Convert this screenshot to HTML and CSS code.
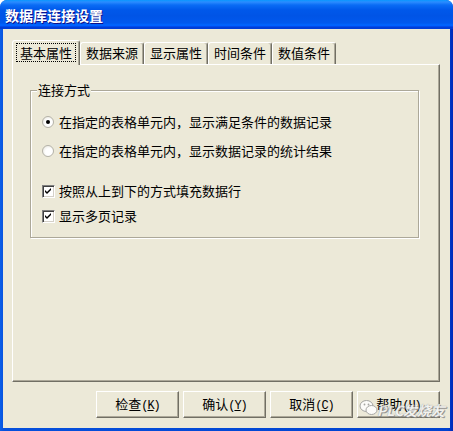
FILE: index.html
```html
<!DOCTYPE html>
<html lang="zh-CN">
<head>
<meta charset="utf-8">
<title>数据库连接设置</title>
<link rel="stylesheet" href="styles.css">
</head>
<body>
<div class="window">
  <div class="titlebar"><span class="title">数据库连接设置</span></div>
  <div class="client">
    <div class="tabs">
      <div class="tab active"><span class="focus">基本属性</span></div>
      <div class="tab">数据来源</div>
      <div class="tab">显示属性</div>
      <div class="tab">时间条件</div>
      <div class="tab">数值条件</div>
    </div>
    <div class="panel">
      <div class="group">
        <span class="legend">连接方式</span>
        <div class="row r1"><span class="radio on"></span>在指定的表格单元内，显示满足条件的数据记录</div>
        <div class="row r2"><span class="radio"></span>在指定的表格单元内，显示数据记录的统计结果</div>
        <div class="row r3"><span class="check"><svg width="9" height="9" viewBox="0 0 9 9"><polygon points="1,3 3,5 7,1 7,3 3,7 1,5" fill="#000"/></svg></span>按照从上到下的方式填充数据行</div>
        <div class="row r4"><span class="check"><svg width="9" height="9" viewBox="0 0 9 9"><polygon points="1,3 3,5 7,1 7,3 3,7 1,5" fill="#000"/></svg></span>显示多页记录</div>
      </div>
    </div>
    <div class="buttons">
      <div class="btn">检查<span class="acc">(<u>K</u>)</span></div>
      <div class="btn">确认<span class="acc">(<u>Y</u>)</span></div>
      <div class="btn">取消<span class="acc">(<u>C</u>)</span></div>
      <div class="btn">帮助<span class="acc">(<u>H</u>)</span></div>
    </div>
  </div>
  <div class="watermark">
    <svg width="20" height="18" viewBox="0 0 20 18"><ellipse cx="7.5" cy="7" rx="6.5" ry="5.5" fill="#fff" stroke="#9a9a9a" stroke-width="1"/><ellipse cx="12.5" cy="11" rx="5.5" ry="4.5" fill="#fff" stroke="#9a9a9a" stroke-width="1"/><circle cx="5.5" cy="5.5" r="0.9" fill="#999"/><circle cx="9.5" cy="5.5" r="0.9" fill="#999"/></svg>
    <span class="wm-text">PLC发烧友</span>
  </div>
</div>
</body>
</html>
```

FILE: styles.css
```css
html, body {
  margin: 0;
  padding: 0;
  background: #ffffff;
}

body {
  font-family: "Noto Sans CJK SC", "Liberation Sans", sans-serif;
  color: #000;
}

.window {
  position: relative;
  width: 453px;
  height: 431px;
  box-sizing: border-box;
  border-radius: 7px 7px 0 0;
  background: linear-gradient(to right, #0a5ee8 0px, #0650dc 4px, #0042cf 448px, #0029b8 453px);
  display: flex;
  flex-direction: column;
  overflow: hidden;
}

.titlebar {
  height: 29px;
  flex: none;
  display: flex;
  align-items: center;
  padding-left: 5px;
  background: linear-gradient(180deg, #0997ff 0px, #2b8cff 2px, #0a6cf5 5px, #0058ea 10px, #0054e6 16px, #0058ee 23px, #0066ff 25px, #005bff 26px, #003dd7 27px, #003dd7 29px);
}

.title {
  color: #fff;
  font-size: 14px;
  font-weight: bold;
  line-height: 18px;
  text-shadow: 1px 1px #0f1089;
}

.client {
  flex: 1;
  margin: 0 3px 3px 3px;
  background: #ece9d8;
  display: flex;
  flex-direction: column;
  padding: 11px 0 0 9px;
}

.tabs {
  display: flex;
  align-items: flex-end;
  height: 25px;
  position: relative;
  z-index: 1;
}

.tab {
  height: 22px;
  margin-bottom: 1px;
  box-sizing: border-box;
  padding: 0 5px;
  border-top: 1px solid #fff;
  border-left: 1px solid #fff;
  border-right: 1px solid #716f64;
  box-shadow: inset -1px 0 #aca899;
  border-radius: 3px 3px 0 0;
  font-size: 13px;
  line-height: 20px;
  background: #ece9d8;
}

.tab.active {
  height: 25px;
  margin-bottom: 0;
  padding: 0 3px;
}

.focus {
  display: block;
  margin-top: 2px;
  padding: 0 3px;
  border: 1px dotted #000;
  line-height: 17px;
}

.panel {
  margin-top: -1px;
  width: 428px;
  height: 318px;
  box-sizing: border-box;
  border: 1px solid;
  border-color: #fff #716f64 #716f64 #fff;
  box-shadow: inset -1px -1px #aca899;
  padding: 25px 0 0 17px;
}

.group {
  position: relative;
  width: 389px;
  height: 148px;
  box-sizing: border-box;
  border: 1px solid #aca899;
  box-shadow: 1px 1px 0 #fff, inset 1px 1px 0 #fff;
  padding-left: 11px;
  display: flex;
  flex-direction: column;
}

.legend {
  position: absolute;
  top: -9px;
  left: 6px;
  padding: 0 1px;
  background: #ece9d8;
  font-size: 13px;
  line-height: 16px;
}

.row {
  display: flex;
  align-items: center;
  height: 16px;
  font-size: 13px;
  line-height: 16px;
  white-space: nowrap;
}

.r1 { margin-top: 23px; }
.r2 { margin-top: 13px; }
.r3 { margin-top: 24px; }
.r4 { margin-top: 9px; }

.radio {
  position: relative;
  width: 12px;
  height: 12px;
  box-sizing: border-box;
  border-radius: 50%;
  border: 1px solid #b4b2a8;
  background: radial-gradient(circle at 60% 60%, #ffffff 40%, #e2e0d6 100%);
  margin-right: 5px;
  flex: none;
}

.radio.on::after {
  content: "";
  position: absolute;
  left: 3px;
  top: 3px;
  width: 4px;
  height: 4px;
  border-radius: 50%;
  background: #000;
}

.check {
  width: 13px;
  height: 13px;
  box-sizing: border-box;
  border: 1px solid;
  border-color: #808080 #fff #fff #808080;
  box-shadow: inset 1px 1px #404040, inset -1px -1px #d4d0c8;
  background: #fff;
  margin-right: 4px;
  flex: none;
  display: flex;
  align-items: center;
  justify-content: center;
}

.check svg {
  display: block;
}

.buttons {
  display: flex;
  gap: 4px;
  margin-top: 9px;
  margin-left: 84px;
}

.btn {
  width: 83px;
  height: 27px;
  box-sizing: border-box;
  border: 1px solid;
  border-color: #fff #716f64 #716f64 #fff;
  box-shadow: inset -1px -1px #aca899;
  background: #ece9d8;
  font-size: 13px;
  line-height: 24px;
  text-align: center;
}

.acc {
  font-family: "Liberation Mono", "DejaVu Sans Mono", monospace;
  font-size: 12px;
  letter-spacing: -1px;
}

.acc u {
  text-underline-offset: 1px;
}

.watermark {
  position: absolute;
  left: 359px;
  top: 396px;
  display: flex;
  align-items: center;
  opacity: 0.85;
}

.wm-text {
  font-size: 14px;
  font-weight: bold;
  font-style: italic;
  color: #f4f4f4;
  text-shadow: 0 0 1px #7a7a7a, 1px 1px 0 #8a8a8a;
  margin-left: -2px;
  margin-top: 4px;
}
```
